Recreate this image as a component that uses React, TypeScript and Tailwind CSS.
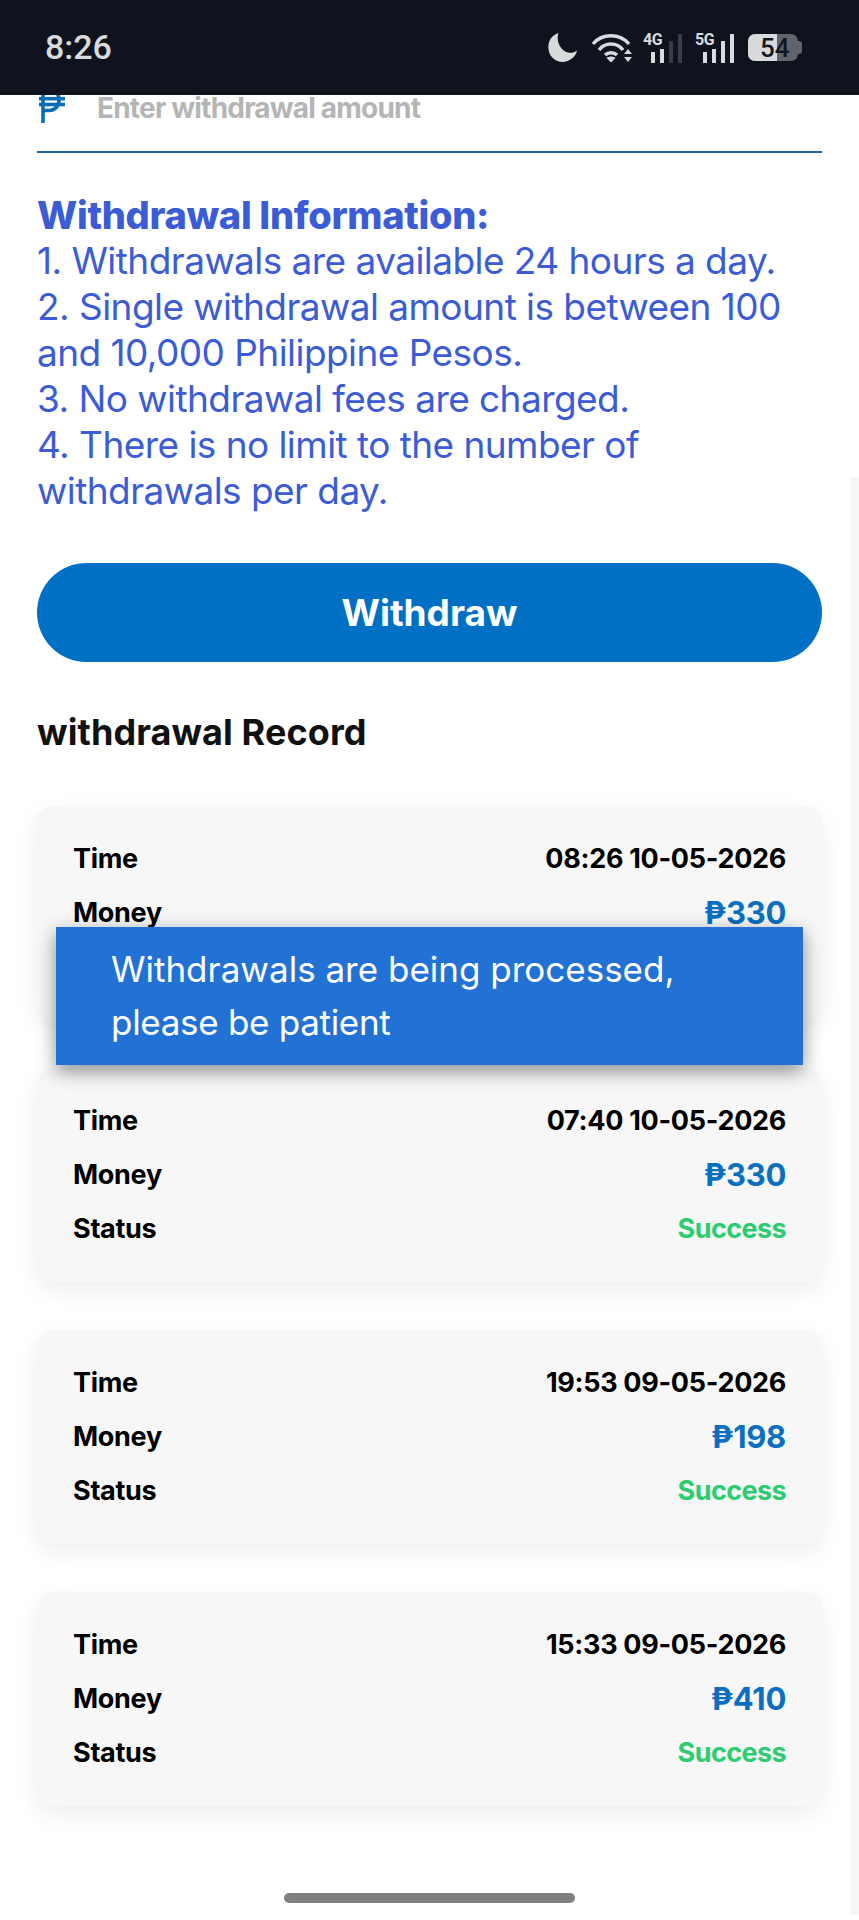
import React from 'react';

const FONT = "font-['Inter','Liberation_Sans',sans-serif]";

const records = [
  { time: '08:26 10-05-2026', money: '₱330' },
  { time: '07:40 10-05-2026', money: '₱330', status: 'Success' },
  { time: '19:53 09-05-2026', money: '₱198', status: 'Success' },
  { time: '15:33 09-05-2026', money: '₱410', status: 'Success' },
];

const info = [
  '1. Withdrawals are available 24 hours a day.',
  '2. Single withdrawal amount is between 100 and 10,000 Philippine Pesos.',
  '3. No withdrawal fees are charged.',
  '4. There is no limit to the number of withdrawals per day.',
];

function Moon() {
  return (
    <svg width="31" height="31" viewBox="0 0 32 32" aria-hidden="true">
      <path d="M12 1 C3 4 0 12 2 20 C4 28 13 33 21 30 C26 28 30 24 31 19 C26 23 19 22 15 17 C11 12 10 6 12 1 Z" fill="#d8dadc" />
    </svg>
  );
}

function Wifi() {
  return (
    <svg width="40" height="30" viewBox="0 0 40 30" fill="none" stroke="#d8dadc" strokeWidth="3.4" aria-hidden="true">
      <path d="M1 11 C10 0 28 0 37 11" />
      <path d="M7 17 C13 9 25 9 31 17" />
      <path d="M13 22 C16 19 22 19 25 22" />
      <path d="M19 29.5 L14.5 25 C17 23 21 23 23.5 25 Z" fill="#d8dadc" stroke="none" />
      <path d="M36 16 L40 21 L32 21 Z M32 24 L40 24 L36 29 Z" fill="#d8dadc" stroke="none" />
    </svg>
  );
}

function Signal({ label, lit }: { label: string; lit: number }) {
  const bars = ['h-[11px]', 'h-[14px]', 'h-[22px]', 'h-[29px]'];
  return (
    <div className="relative h-[30px] w-[39px]">
      <span className="absolute left-0 top-[-1px] text-[16px] font-bold leading-[15px] tracking-[-0.4px] text-[#d8dadc] font-['Roboto',sans-serif]">{label}</span>
      <div className="absolute bottom-0 left-[8px] flex items-end gap-[5px]">
        {bars.map((h, i) => (
          <div key={h} className={`w-[4px] ${h} ${i >= lit ? 'bg-[#3a3d47]' : 'bg-[#d8dadc]'}`} />
        ))}
      </div>
    </div>
  );
}

function Battery() {
  return (
    <div className="flex items-center">
      <div className="relative flex h-[27px] w-[50px] items-center overflow-hidden rounded-[7px] bg-[#62646c]">
        <div className="absolute inset-y-0 left-0 w-[29px] bg-[#d8dadc]" />
        <span className="relative ml-[12px] text-[26px] font-medium leading-none text-[#14161d] font-['Roboto',sans-serif]">54</span>
      </div>
      <div className="h-[13px] w-[4px] rounded-r-[3px] bg-[#62646c]" />
    </div>
  );
}

function StatusBar() {
  return (
    <div className="flex h-[95px] items-center justify-between bg-[#0f131e] pl-[45px] pr-[57px]">
      <span className="text-[34px] font-medium text-[#d8dadc] font-['Roboto',sans-serif]">8:26</span>
      <div className="flex items-center">
        <Moon />
        <div className="ml-[14px]"><Wifi /></div>
        <div className="ml-[11px]"><Signal label="4G" lit={2} /></div>
        <div className="ml-[13px]"><Signal label="5G" lit={4} /></div>
        <div className="ml-[14px]"><Battery /></div>
      </div>
    </div>
  );
}

function PesoIcon() {
  return (
    <svg width="30" height="30" viewBox="0 0 30 30" fill="none" stroke="#0a6db5" strokeWidth="3.6" aria-hidden="true">
      <path d="M6 28 V-6 H12 C19 -6 22 0 22 5 C22 11 18 15.5 12 15.5 H6" />
      <path d="M2 3.7 H28" />
      <path d="M2 9.5 H28" />
    </svg>
  );
}

function RecordCard({ time, money, status }: { time: string; money: string; status?: string }) {
  return (
    <div className="flex h-[214px] flex-col justify-center gap-[13px] rounded-[16px] bg-[#f7f7f7] px-[36px] shadow-[0_8px_24px_rgba(0,0,0,0.07)]">
      <div className="flex h-[41px] items-center justify-between text-[27px] font-bold tracking-[-0.3px] text-black">
        <span>Time</span>
        <span>{time}</span>
      </div>
      <div className="flex h-[41px] items-center justify-between text-[27px] font-bold tracking-[-0.3px] text-black">
        <span>Money</span>
        <span className="text-[31px] text-[#0a6fc0]">{money}</span>
      </div>
      {/* the first card's status row sits behind the toast */}
      <div className="flex h-[41px] items-center justify-between text-[27px] font-bold tracking-[-0.3px] text-black">
        {status && <span>Status</span>}
        {status && <span className="tracking-[-0.6px] text-[#2ecc71]">{status}</span>}
      </div>
    </div>
  );
}

export default function App() {
  return (
    <div className={`relative h-[1920px] w-[859px] overflow-hidden bg-white ${FONT}`}>
      <StatusBar />

      {/* scrollbar track at the right edge */}
      <div className="absolute bottom-[5px] right-0 top-[477px] w-[9px] bg-[#f7f7f7]" />

      <div className="relative px-[37px]">
        {/* amount input, scrolled partly under the status bar */}
        <div className="flex h-[58px] items-start gap-[30px] border-b-2 border-[#1a6b9c]">
          <PesoIcon />
          <span className="text-[28px] font-bold leading-[26px] tracking-[-0.8px] text-[#b5b5b5]">Enter withdrawal amount</span>
        </div>

        <div className="mt-[39px] text-[37px] leading-[46px] tracking-[-0.55px] text-[#3c5cd6]">
          <div className="text-[38px] font-extrabold tracking-[-0.3px]">Withdrawal Information:</div>
          {info.map((line) => (
            <div key={line}>{line}</div>
          ))}
        </div>

        <button type="button" className="mt-[49px] flex h-[99px] w-full items-center justify-center rounded-full bg-[#0070c5] text-[37px] font-bold text-white">
          Withdraw
        </button>

        <h2 className="mt-[48px] text-[36px] font-bold leading-[44px] tracking-[0.1px] text-[#111]">withdrawal Record</h2>

        <div className="mt-[52px] flex flex-col gap-[48px]">
          {records.map((r) => (
            <RecordCard key={r.time} time={r.time} money={r.money} status={r.status} />
          ))}
        </div>
      </div>

      {/* toast */}
      <div className="absolute left-[56px] top-[927px] flex h-[138px] w-[747px] flex-col justify-center bg-[#2272d6] pl-[55px] text-[35px] leading-[53px] text-white shadow-[0_6px_18px_rgba(0,0,0,0.45)]">
        <div>Withdrawals are being processed,</div>
        <div className="tracking-[-0.3px]">please be patient</div>
      </div>

      {/* home indicator */}
      <div className="absolute left-[284px] top-[1893px] h-[10px] w-[291px] rounded-full bg-[#808080]" />
    </div>
  );
}
